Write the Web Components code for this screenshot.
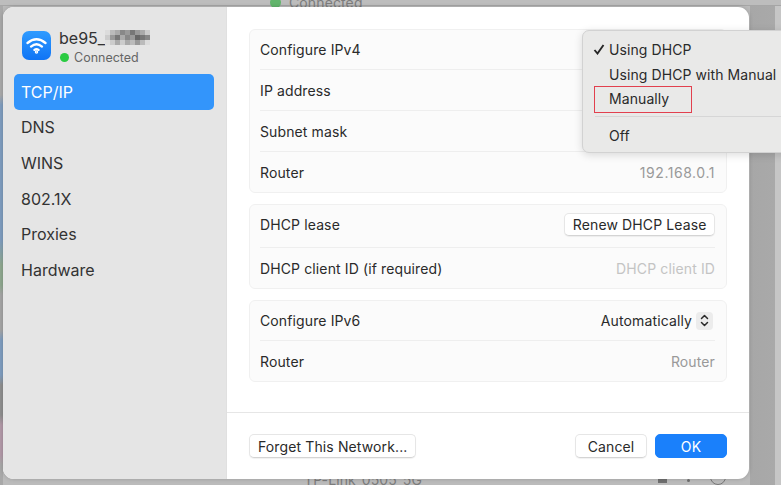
<!DOCTYPE html>
<html>
<head>
<meta charset="utf-8">
<style>
  html, body { margin: 0; height: 100%; }
  body { width: 781px; height: 485px; overflow: hidden; background: #b8b8b8; font-family: Inter, "Liberation Sans", sans-serif; color: #262626; letter-spacing: .12px; }
</style>
</head>
<body>
<wifi-dialog></wifi-dialog>

<script>
class SideItem extends HTMLElement {
  constructor() {
    super();
    this.attachShadow({mode: 'open'}).innerHTML = `
      <style>
        :host { display: flex; align-items: center; height: 35.6px; padding-left: 7px; border-radius: 5px; font-size: 16px; letter-spacing: 0; color: #333; }
        :host([active]) { background: #3395fb; color: #fff; }
      </style>
      <slot></slot>`;
  }
}
customElements.define('side-item', SideItem);

class FormGroup extends HTMLElement {
  constructor() {
    super();
    this.attachShadow({mode: 'open'}).innerHTML = `
      <style>
        :host { display: block; background: #fbfbfb; border: 1px solid #f0f0f0; border-radius: 6px; padding: 0 11px 0 10px; }
      </style>
      <slot></slot>`;
  }
}
customElements.define('form-group', FormGroup);

class FormRow extends HTMLElement {
  constructor() {
    super();
    this.attachShadow({mode: 'open'}).innerHTML = `
      <style>
        :host { display: flex; align-items: center; justify-content: space-between; height: var(--row, 40px); border-bottom: 1px solid #eeeeee; font-size: 14px; color: #2a2a2a; }
        :host([first]) { height: var(--first, 39px); padding-bottom: var(--first-pad, 0); box-sizing: content-box; }
        :host([last]) { border-bottom: 0; }
        .value { display: flex; align-items: center; gap: 4px; color: #999; }
      </style>
      <slot name="label"></slot>
      <div class="value"><slot></slot></div>`;
  }
}
customElements.define('form-row', FormRow);

class MacButton extends HTMLElement {
  constructor() {
    super();
    this.attachShadow({mode: 'open'}).innerHTML = `
      <style>
        :host { display: inline-flex; align-items: center; justify-content: center; height: 22px; padding: 0 8px; background: #fff; border: 1px solid #e6e6e6; border-bottom-color: #d4d4d4; border-radius: 5px; box-shadow: 0 1px 1px rgba(0,0,0,.06); font-size: 14px; color: #2a2a2a; white-space: nowrap; }
        :host([primary]) { background: #1a80fb; border-color: #1a80fb; color: #fff; box-shadow: none; }
      </style>
      <slot></slot>`;
  }
}
customElements.define('mac-button', MacButton);

class PopupMenu extends HTMLElement {
  constructor() {
    super();
    this.attachShadow({mode: 'open'}).innerHTML = `
      <style>
        :host { position: absolute; left: 582px; top: 30px; width: 220px; height: 123px; box-sizing: border-box; background: #e9e9e8; border: 1px solid #d2d2d2; border-radius: 7px; box-shadow: 0 2px 8px rgba(0,0,0,.14); font-size: 14px; letter-spacing: .08px; color: #2a2a2a; }
        .list { display: flex; flex-direction: column; padding: 6px 0 0 26px; }
        .item { position: relative; height: 24.7px; display: flex; align-items: center; white-space: nowrap; }
        svg { position: absolute; left: -16px; top: 7px; }
        hr { border: 0; border-top: 1px solid #d6d6d6; margin: 5px 0 6px -14px; }
        .mark { position: absolute; left: 11px; top: 55px; width: 98px; height: 27px; box-sizing: border-box; border: 1.5px solid #e2404e; }
      </style>
      <div class="list">
        <div class="item"><svg width="12" height="11" viewBox="0 0 12 11"><path d="M1.5 6 L4.5 9.5 L10.5 1" fill="none" stroke="#262626" stroke-width="1.9"/></svg>Using DHCP</div>
        <div class="item">Using DHCP with Manual</div>
        <div class="item">Manually</div>
        <hr>
        <div class="item">Off</div>
      </div>
      <div class="mark"></div>`;
  }
}
customElements.define('popup-menu', PopupMenu);

class NetworkHeader extends HTMLElement {
  constructor() {
    super();
    this.attachShadow({mode: 'open'}).innerHTML = `
      <style>
        :host { display: flex; align-items: center; gap: 8px; height: 44px; padding-left: 8px; letter-spacing: 0; }
        .icon { width: 29px; height: 29px; border-radius: 7px; background: linear-gradient(#2f9bff, #0f74f5); display: flex; align-items: center; justify-content: center; }
        .text { padding-top: 3px; }
        .name { display: flex; align-items: center; font-size: 16px; color: #333; line-height: 20px; }
        .blur { display: grid; grid-template-columns: repeat(9, 5px); grid-auto-rows: 5px; filter: blur(.7px); }
        .status { display: flex; align-items: center; gap: 5px; margin: 2px 0 0 1px; font-size: 12.5px; color: #666; line-height: 16px; }
        .dot { width: 9px; height: 9px; border-radius: 50%; background: #2acb42; }
      </style>
      <div class="icon">
        <svg width="21" height="17" viewBox="0 0 21 17" fill="none" stroke="#fff" stroke-width="2.3" stroke-linecap="round">
          <path d="M1.5 6 Q10.5 -1.5 19.5 6"/>
          <path d="M5 9.6 Q10.5 5 16 9.6"/>
          <path d="M8.4 12.9 Q10.5 11.4 12.6 12.9"/>
          <circle cx="10.5" cy="15" r=".6" fill="#fff"/>
        </svg>
      </div>
      <div class="text">
        <div class="name">be95_<span class="blur">${
          ['#dcdcdc','#bbb','#aaa','#888','#999','#777','#999','#aaa','#ccc',
           '#ccc','#999','#777','#aaa','#888','#999','#666','#777','#888',
           '#e0e0e0','#ccc','#aaa','#ccc','#aaa','#bbb','#999','#bbb','#dcdcdc']
            .map(c => `<i style="background:${c}"></i>`).join('')
        }</span></div>
        <div class="status"><span class="dot"></span>Connected</div>
      </div>`;
  }
}
customElements.define('network-header', NetworkHeader);

class WifiDialog extends HTMLElement {
  constructor() {
    super();
    this.attachShadow({mode: 'open'}).innerHTML = `
      <style>
        :host { display: block; position: relative; width: 781px; height: 485px; overflow: hidden;
          background:
            linear-gradient(#bdbdbd 0 5px, #a6a6a6 5px 6px, transparent 6px) no-repeat,
            linear-gradient(#a9a9a9 0 95px, #7f9dbf 105px 240px, #8fa88f 265px 285px, #a5a5a5 295px 330px, #7f9dbf 340px 375px, #8f8f8f 385px 415px, #b299a8 425px 455px, #a8a8a8 465px) 0 0 / 3px 100% no-repeat,
            linear-gradient(90deg, #bbb 0, #bbb 96%, #a7a7a7 96%, #a9a9a9 99.2%, #c6c6c6 99.2%);
        }
        .behind { position: absolute; font-size: 14px; color: #7c7c7c; white-space: nowrap; }
        .top { left: 270px; top: -6px; display: flex; align-items: center; gap: 8px; }
        .top i { width: 11px; height: 11px; border-radius: 50%; background: #62b56c; }
        .bottom { left: 304px; top: 471px; }
        .tray { position: absolute; background: #6f6f6f; }
        .ring { position: absolute; left: 710px; top: 469px; width: 14px; height: 14px; border: 1px solid #777; border-radius: 50%; }
        .dialog { display: flex; position: absolute; left: 3px; top: 7px; width: 746px; height: 472px; border-radius: 11px; overflow: hidden; background: #fff; box-shadow: 0 0 4px rgba(0,0,0,.18); }
        aside { width: 224px; box-sizing: border-box; background: #e5e5e5; padding: 16px 12px 0 11px; border-right: 1px solid #e0e0e0; }
        .nav { margin-top: 7px; display: flex; flex-direction: column; }
        main { flex: 1; display: flex; flex-direction: column; }
        .groups { flex: 1; display: flex; flex-direction: column; gap: 11px; padding: 22px 22px 0; }
        footer { height: 66px; border-top: 1px solid #e6e6e6; display: flex; align-items: center; padding: 0 22px; gap: 8px; }
        .spacer { flex: 1; }
        .stepper { width: 17px; height: 18px; margin-right: 2px; border-radius: 4px; background: #ececec; display: flex; align-items: center; justify-content: center; }
        .dark { color: #2a2a2a; }
        .light { color: #c4c4c4; }
        .addr { letter-spacing: .55px; }
      </style>
      <div class="behind top"><i></i>Connected</div>
      <div class="behind bottom">TP-Link_0505_5G</div>
      <div class="tray" style="left:658px;top:479px;width:9px;height:4px"></div>
      <div class="tray" style="left:687px;top:479px;width:3px;height:3px;border-radius:50%"></div>
      <div class="ring"></div>
      <section class="dialog">
        <aside>
          <network-header></network-header>
          <div class="nav">
            <side-item active>TCP/IP</side-item>
            <side-item>DNS</side-item>
            <side-item>WINS</side-item>
            <side-item>802.1X</side-item>
            <side-item>Proxies</side-item>
            <side-item>Hardware</side-item>
          </div>
        </aside>
        <main>
          <div class="groups">
            <form-group style="--first:39px;--row:40px">
              <form-row first><span slot="label">Configure IPv4</span></form-row>
              <form-row><span slot="label">IP address</span></form-row>
              <form-row><span slot="label">Subnet mask</span></form-row>
              <form-row last><span slot="label">Router</span><span class="addr">192.168.0.1</span></form-row>
            </form-group>
            <form-group style="--first:38px;--first-pad:4px;--row:40px">
              <form-row first><span slot="label">DHCP lease</span><mac-button style="height:21px;padding:0 7.5px">Renew DHCP Lease</mac-button></form-row>
              <form-row last><span slot="label">DHCP client ID (if required)</span><span class="light">DHCP client ID</span></form-row>
            </form-group>
            <form-group style="--first:39px;--row:40px">
              <form-row first><span slot="label">Configure IPv6</span><span class="dark">Automatically</span>
                <span class="stepper"><svg width="9" height="13" viewBox="0 0 9 13" fill="none" stroke="#2a2a2a" stroke-width="1.5" stroke-linecap="round" stroke-linejoin="round"><path d="M1.5 4.5 L4.5 1.5 L7.5 4.5"/><path d="M1.5 8.5 L4.5 11.5 L7.5 8.5"/></svg></span>
              </form-row>
              <form-row last><span slot="label">Router</span>Router</form-row>
            </form-group>
          </div>
          <footer>
            <mac-button>Forget This Network...</mac-button>
            <span class="spacer"></span>
            <mac-button style="width:54px">Cancel</mac-button>
            <mac-button primary style="width:54px">OK</mac-button>
          </footer>
        </main>
      </section>
      <popup-menu></popup-menu>`;
  }
}
customElements.define('wifi-dialog', WifiDialog);
</script>
</body>
</html>
